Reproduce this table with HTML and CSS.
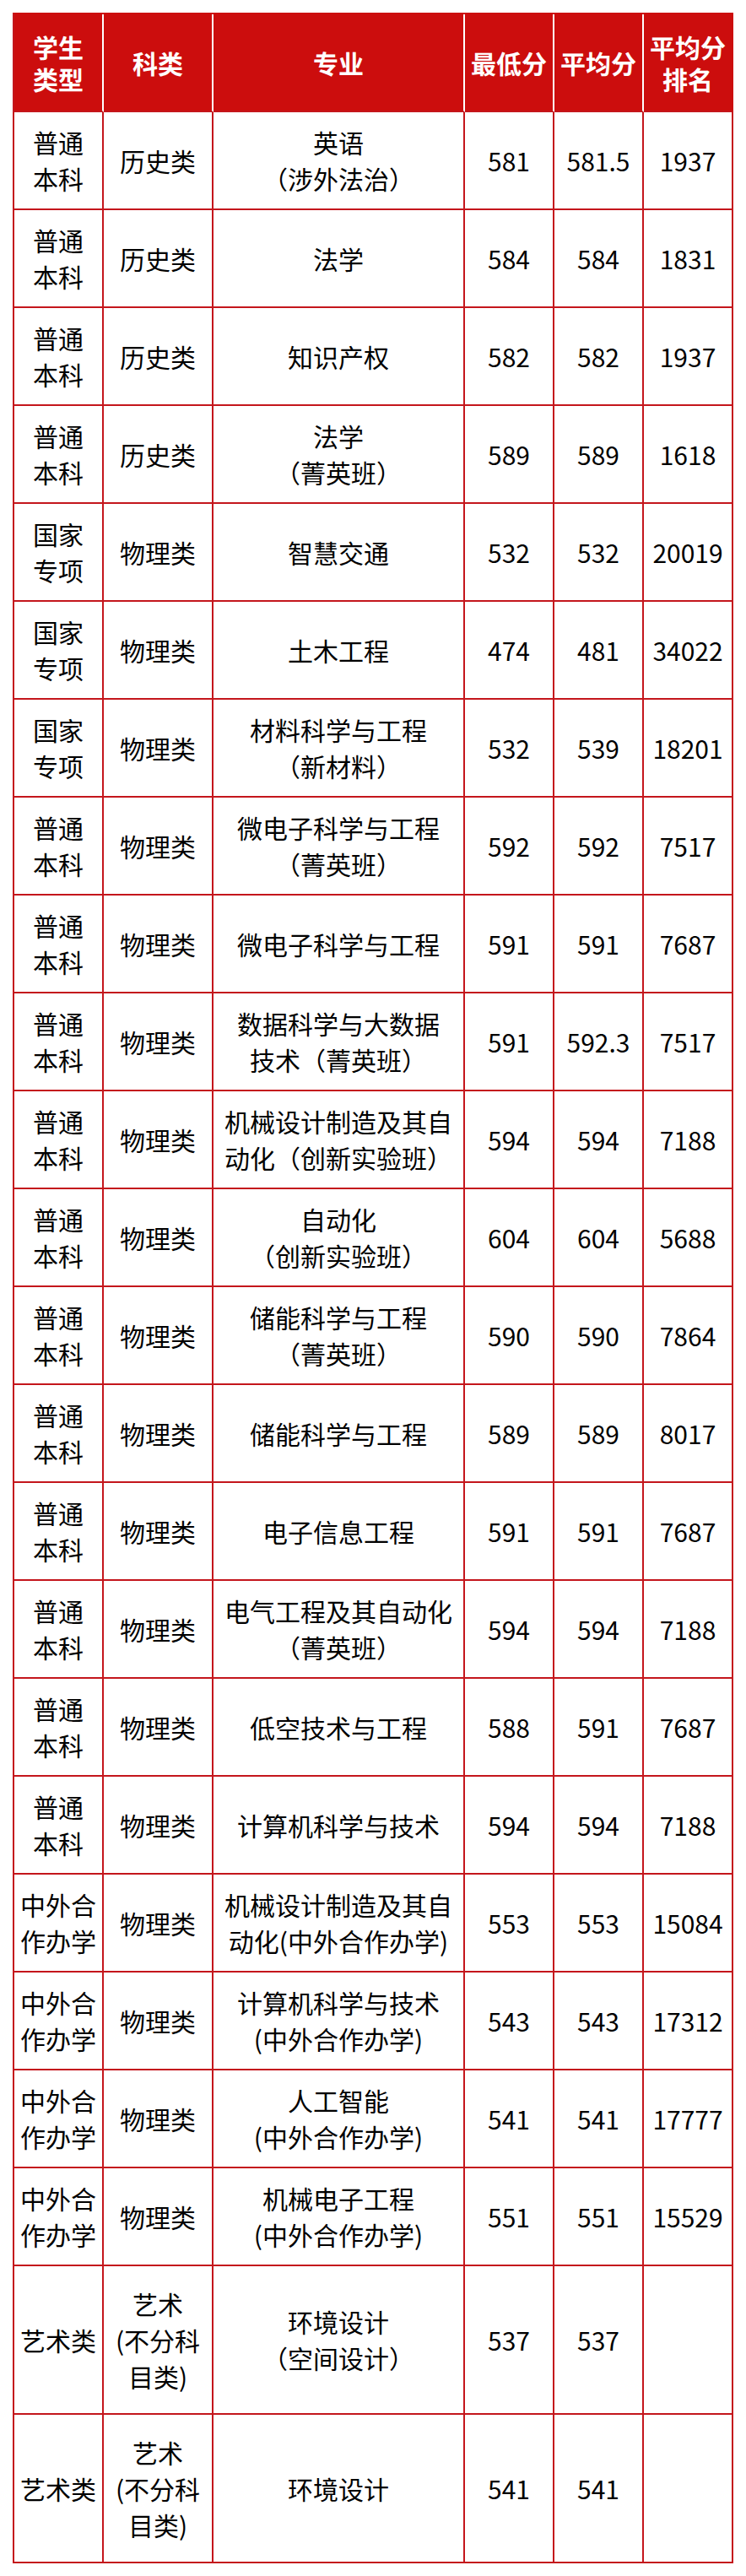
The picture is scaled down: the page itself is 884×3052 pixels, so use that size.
FILE: index.html
```html
<!DOCTYPE html>
<html lang="zh-CN">
<head>
<meta charset="utf-8">
<title>录取分数</title>
<link rel="stylesheet" href="styles.css">
</head>
<body>
<div class="sheet">
  <div class="th">学生<br>类型</div>
  <div class="th">科类</div>
  <div class="th">专业</div>
  <div class="th">最低分</div>
  <div class="th">平均分</div>
  <div class="th last">平均分<br>排名</div>

  <div class="td">普通<br>本科</div><div class="td">历史类</div><div class="td">英语<br>（涉外法治）</div><div class="td">581</div><div class="td">581.5</div><div class="td">1937</div>
  <div class="td">普通<br>本科</div><div class="td">历史类</div><div class="td">法学</div><div class="td">584</div><div class="td">584</div><div class="td">1831</div>
  <div class="td">普通<br>本科</div><div class="td">历史类</div><div class="td">知识产权</div><div class="td">582</div><div class="td">582</div><div class="td">1937</div>
  <div class="td">普通<br>本科</div><div class="td">历史类</div><div class="td">法学<br>（菁英班）</div><div class="td">589</div><div class="td">589</div><div class="td">1618</div>
  <div class="td">国家<br>专项</div><div class="td">物理类</div><div class="td">智慧交通</div><div class="td">532</div><div class="td">532</div><div class="td">20019</div>
  <div class="td">国家<br>专项</div><div class="td">物理类</div><div class="td">土木工程</div><div class="td">474</div><div class="td">481</div><div class="td">34022</div>
  <div class="td">国家<br>专项</div><div class="td">物理类</div><div class="td">材料科学与工程<br>（新材料）</div><div class="td">532</div><div class="td">539</div><div class="td">18201</div>
  <div class="td">普通<br>本科</div><div class="td">物理类</div><div class="td">微电子科学与工程<br>（菁英班）</div><div class="td">592</div><div class="td">592</div><div class="td">7517</div>
  <div class="td">普通<br>本科</div><div class="td">物理类</div><div class="td">微电子科学与工程</div><div class="td">591</div><div class="td">591</div><div class="td">7687</div>
  <div class="td">普通<br>本科</div><div class="td">物理类</div><div class="td">数据科学与大数据<br>技术（菁英班）</div><div class="td">591</div><div class="td">592.3</div><div class="td">7517</div>
  <div class="td">普通<br>本科</div><div class="td">物理类</div><div class="td">机械设计制造及其自<br>动化（创新实验班）</div><div class="td">594</div><div class="td">594</div><div class="td">7188</div>
  <div class="td">普通<br>本科</div><div class="td">物理类</div><div class="td">自动化<br>（创新实验班）</div><div class="td">604</div><div class="td">604</div><div class="td">5688</div>
  <div class="td">普通<br>本科</div><div class="td">物理类</div><div class="td">储能科学与工程<br>（菁英班）</div><div class="td">590</div><div class="td">590</div><div class="td">7864</div>
  <div class="td">普通<br>本科</div><div class="td">物理类</div><div class="td">储能科学与工程</div><div class="td">589</div><div class="td">589</div><div class="td">8017</div>
  <div class="td">普通<br>本科</div><div class="td">物理类</div><div class="td">电子信息工程</div><div class="td">591</div><div class="td">591</div><div class="td">7687</div>
  <div class="td">普通<br>本科</div><div class="td">物理类</div><div class="td">电气工程及其自动化<br>（菁英班）</div><div class="td">594</div><div class="td">594</div><div class="td">7188</div>
  <div class="td">普通<br>本科</div><div class="td">物理类</div><div class="td">低空技术与工程</div><div class="td">588</div><div class="td">591</div><div class="td">7687</div>
  <div class="td">普通<br>本科</div><div class="td">物理类</div><div class="td">计算机科学与技术</div><div class="td">594</div><div class="td">594</div><div class="td">7188</div>
  <div class="td">中外合<br>作办学</div><div class="td">物理类</div><div class="td">机械设计制造及其自<br>动化(中外合作办学)</div><div class="td">553</div><div class="td">553</div><div class="td">15084</div>
  <div class="td">中外合<br>作办学</div><div class="td">物理类</div><div class="td">计算机科学与技术<br>(中外合作办学)</div><div class="td">543</div><div class="td">543</div><div class="td">17312</div>
  <div class="td">中外合<br>作办学</div><div class="td">物理类</div><div class="td">人工智能<br>(中外合作办学)</div><div class="td">541</div><div class="td">541</div><div class="td">17777</div>
  <div class="td">中外合<br>作办学</div><div class="td">物理类</div><div class="td">机械电子工程<br>(中外合作办学)</div><div class="td">551</div><div class="td">551</div><div class="td">15529</div>
  <div class="td">艺术类</div><div class="td">艺术<br>(不分科<br>目类)</div><div class="td">环境设计<br>（空间设计）</div><div class="td">537</div><div class="td">537</div><div class="td"></div>
  <div class="td">艺术类</div><div class="td">艺术<br>(不分科<br>目类)</div><div class="td">环境设计</div><div class="td">541</div><div class="td">541</div><div class="td"></div>
</div>
</body>
</html>
```

FILE: styles.css
```css
html, body {
  margin: 0;
  padding: 0;
  background: #ffffff;
}

body {
  font-family: "Noto Sans CJK SC", "Noto Sans", sans-serif;
  color: #000000;
}

.sheet {
  display: grid;
  grid-template-columns: 106px 130px 298px 106px 106px 106px;
  grid-template-rows: repeat(23, 116px) 176px 176px;
  width: max-content;
  margin: 15px 0 0 15px;
  border-left: 2px solid #c4161c;
  border-top: 2px solid #cc0d0d;
}

.th,
.td {
  box-sizing: border-box;
  display: flex;
  align-items: center;
  justify-content: center;
  text-align: center;
  border-right: 2px solid #c4161c;
  border-bottom: 2px solid #c4161c;
  font-size: 30px;
}

.th {
  background: #cc0d0d;
  color: #ffffff;
  font-weight: 700;
  line-height: 38px;
  border-right-color: #ffffff;
  border-bottom-color: #c4161c;
}

.th.last {
  border-right-color: #cc0d0d;
}

.td {
  line-height: 43px;
}
```
